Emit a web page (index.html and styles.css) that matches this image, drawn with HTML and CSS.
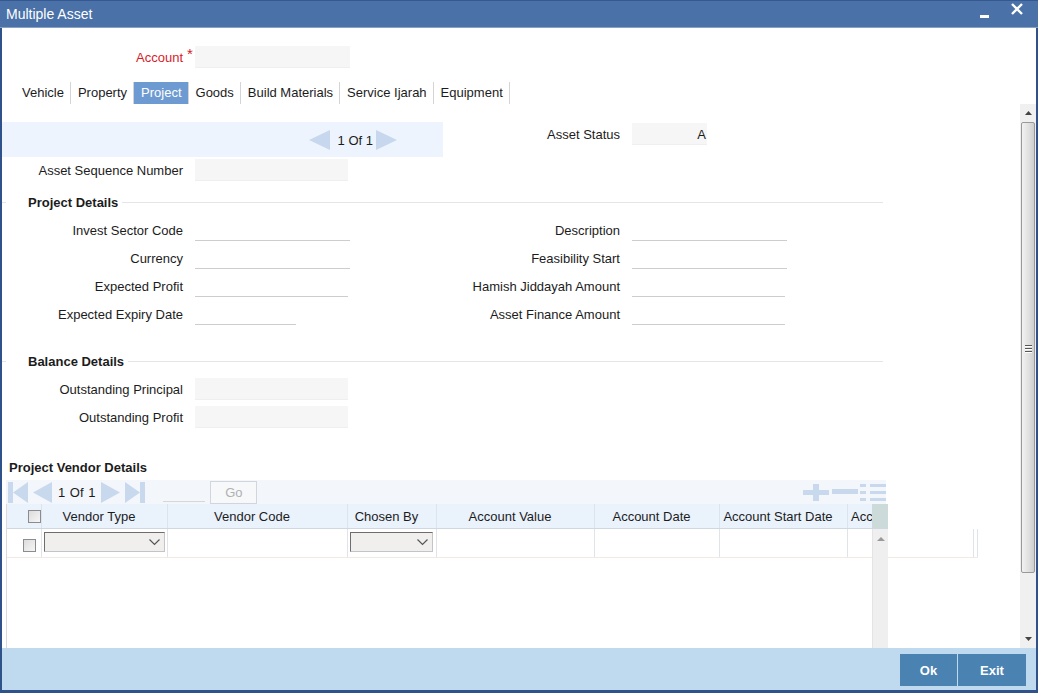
FILE: index.html
```html
<!DOCTYPE html>
<html>
<head>
<meta charset="utf-8">
<link rel="stylesheet" href="styles.css">
</head>
<body>
<div class="window">
  <div class="titlebar">
    <span class="title">Multiple Asset</span>
    <div class="winctrls">
      <span class="min"></span>
      <svg class="close" width="12" height="12" viewBox="0 0 12 12"><path d="M1 1 L11 11 M11 1 L1 11" stroke="#fff" stroke-width="2.4" fill="none"/></svg>
    </div>
  </div>
  <div class="frame">
    <div class="header">
      <div class="acct-row">
        <span class="lbl req">Account</span><span class="star">*</span><div class="inp fill w155 nomargin"></div>
      </div>
      <div class="tabs">
        <span class="tab">Vehicle</span>
        <span class="tab">Property</span>
        <span class="tab active">Project</span>
        <span class="tab">Goods</span>
        <span class="tab">Build Materials</span>
        <span class="tab">Service Ijarah</span>
        <span class="tab">Equipment</span>
      </div>
    </div>
    <div class="body">
      <div class="content">
        <div class="row-top">
          <div class="pager">
            <svg width="21" height="20" viewBox="0 0 21 20"><polygon points="21,0 21,20 0,10" fill="#c6d7ee"/></svg>
            <span class="ptext">1 Of 1</span>
            <svg width="21" height="20" viewBox="0 0 21 20"><polygon points="0,0 21,10 0,20" fill="#c6d7ee"/></svg>
          </div>
          <div class="status">
            <span class="lbl st">Asset Status</span>
            <div class="inp fill w75 aval">A</div>
          </div>
        </div>
        <div class="frow seq">
          <span class="lbl">Asset Sequence Number</span><div class="inp fill w153"></div>
        </div>

        <div class="sect">Project Details</div>
        <div class="frow first">
          <div class="fcol"><span class="lbl">Invest Sector Code</span><div class="inp line w155"></div></div>
          <div class="fcol r"><span class="lbl">Description</span><div class="inp line w155"></div></div>
        </div>
        <div class="frow">
          <div class="fcol"><span class="lbl">Currency</span><div class="inp line w155"></div></div>
          <div class="fcol r"><span class="lbl">Feasibility Start</span><div class="inp line w155"></div></div>
        </div>
        <div class="frow">
          <div class="fcol"><span class="lbl">Expected Profit</span><div class="inp line w153"></div></div>
          <div class="fcol r"><span class="lbl">Hamish Jiddayah Amount</span><div class="inp line w153"></div></div>
        </div>
        <div class="frow">
          <div class="fcol"><span class="lbl">Expected Expiry Date</span><div class="inp line w101"></div></div>
          <div class="fcol r"><span class="lbl">Asset Finance Amount</span><div class="inp line w153"></div></div>
        </div>

        <div class="sect bal">Balance Details</div>
        <div class="frow first">
          <div class="fcol"><span class="lbl">Outstanding Principal</span><div class="inp fill w153"></div></div>
        </div>
        <div class="frow">
          <div class="fcol"><span class="lbl">Outstanding Profit</span><div class="inp fill w153"></div></div>
        </div>

        <div class="vendor">
          <div class="vh">Project Vendor Details</div>
          <div class="toolbar">
            <svg class="ic first" width="20" height="21" viewBox="0 0 20 21"><rect x="0" y="0" width="5" height="21" fill="#c8d9ee"/><polygon points="20,0 20,21 5,10.5" fill="#c8d9ee"/></svg>
            <svg class="ic prev" width="19" height="21" viewBox="0 0 19 21"><polygon points="19,0 19,21 0,10.5" fill="#c8d9ee"/></svg>
            <span class="ttext">1 Of 1</span>
            <svg class="ic next" width="19" height="21" viewBox="0 0 19 21"><polygon points="0,0 19,10.5 0,21" fill="#c8d9ee"/></svg>
            <svg class="ic last" width="20" height="21" viewBox="0 0 20 21"><polygon points="0,0 15,10.5 0,21" fill="#c8d9ee"/><rect x="15" y="0" width="5" height="21" fill="#c8d9ee"/></svg>
            <div class="pgin"></div>
            <div class="gobtn">Go</div>
            <div class="spacer"></div>
            <svg class="ic" width="26" height="17" viewBox="0 0 26 17"><rect x="0" y="6" width="26" height="5" fill="#c8d9ee"/><rect x="10" y="0" width="6" height="17" fill="#c8d9ee"/></svg>
            <svg class="ic minus" width="26" height="17" viewBox="0 0 26 17"><rect x="0" y="5" width="26" height="5" fill="#c8d9ee"/></svg>
            <svg class="ic list" width="26" height="17" viewBox="0 0 26 17"><rect x="0" y="0" width="6" height="3" fill="#c8d9ee"/><rect x="10" y="0" width="16" height="3" fill="#c8d9ee"/><rect x="0" y="7" width="6" height="3" fill="#c8d9ee"/><rect x="10" y="7" width="16" height="3" fill="#c8d9ee"/><rect x="0" y="14" width="6" height="3" fill="#c8d9ee"/><rect x="10" y="14" width="16" height="3" fill="#c8d9ee"/></svg>
          </div>
          <div class="table">
            <div class="thead">
              <div class="th c0"><span class="chk hchk"></span></div>
              <div class="th c1">Vendor Type</div>
              <div class="th c2">Vendor Code</div>
              <div class="th c3">Chosen By</div>
              <div class="th c4">Account Value</div>
              <div class="th c5">Account Date</div>
              <div class="th c6">Account Start Date</div>
              <div class="th c7">Acc</div>
              <div class="th c8"></div>
            </div>
            <div class="trow">
              <div class="td c0"><span class="chk rchk"></span></div>
              <div class="td c1"><div class="sel s1"><svg width="11" height="7" viewBox="0 0 11 7"><polyline points="0.5,0.5 5.5,5.5 10.5,0.5" stroke="#555" stroke-width="1.2" fill="none"/></svg></div></div>
              <div class="td c2"></div>
              <div class="td c3"><div class="sel s3"><svg width="11" height="7" viewBox="0 0 11 7"><polyline points="0.5,0.5 5.5,5.5 10.5,0.5" stroke="#555" stroke-width="1.2" fill="none"/></svg></div></div>
              <div class="td c4"></div>
              <div class="td c5"></div>
              <div class="td c6"></div>
              <div class="td c7w"></div>
              <div class="td c9"></div>
            </div>
            <div class="iscroll">
              <svg width="8" height="5" viewBox="0 0 8 5"><polygon points="0,5 4,1 8,5" fill="#9a9a9a"/></svg>
            </div>
          </div>
        </div>
      </div>
      <div class="vscroll">
        <div class="arr up"><svg width="7" height="4" viewBox="0 0 7 4"><polygon points="0,4 3.5,0 7,4" fill="#444"/></svg></div>
        <div class="thumb"><div class="grip"><i></i><i></i><i></i></div></div>
        <div class="track"></div>
        <div class="arr down"><svg width="7" height="4" viewBox="0 0 7 4"><polygon points="0,0 3.5,4 7,0" fill="#444"/></svg></div>
      </div>
    </div>
    <div class="footer">
      <button class="btn ok">Ok</button>
      <button class="btn exit">Exit</button>
    </div>
  </div>
</div>
</body>
</html>
```
FILE: styles.css
```css
* { box-sizing: border-box; }
html, body { margin: 0; padding: 0; }
body {
  width: 1038px;
  height: 693px;
  overflow: hidden;
  background: #fff;
  font-family: "Liberation Sans", Arial, sans-serif;
  font-size: 13px;
  color: #1c1c1c;
}
.window { width: 1038px; height: 693px; display: flex; flex-direction: column; }

.titlebar {
  height: 28px;
  flex: none;
  background: #4a71a8;
  border-top: 1px solid #35598f;
  border-bottom: 1px solid #8aa2c2;
  display: flex;
  align-items: center;
  padding-left: 6px;
  color: #fff;
}
.title { font-size: 14px; line-height: 26px; }
.winctrls { margin-left: auto; display: flex; align-items: center; height: 26px; }
.min { width: 9px; height: 3px; background: #fff; margin-top: 4px; margin-right: 22px; }
.close { margin-right: 15px; margin-bottom: 10px; }

.frame {
  flex: 1;
  border-left: 2px solid #2f528a;
  border-right: 2px solid #2f528a;
  border-bottom: 3px solid #2f528a;
  display: flex;
  flex-direction: column;
}

.header { height: 76px; flex: none; padding-top: 18px; }
.acct-row { display: flex; height: 22px; }
.lbl { width: 181px; flex: none; text-align: right; line-height: 22px; padding-top: 1px; white-space: nowrap; }
.req { color: #d41d2b; }
.star { width: 12px; flex: none; color: #d41d2b; font-size: 15px; line-height: 14px; padding-left: 4px; padding-top: 1px; }
.inp { height: 22px; flex: none; margin-left: 12px; }
.inp.nomargin { margin-left: 0; }
.fill { background: #f6f6f6; border-bottom: 1px solid #efefef; }
.line { border-bottom: 1px solid #cdcdcd; }
.w155 { width: 155px; }
.w153 { width: 153px; }
.w101 { width: 101px; }
.w75 { width: 75px; }

.tabs { display: flex; margin-top: 14px; padding-left: 13px; height: 22px; }
.tab { padding: 0 6px 0 7px; line-height: 22px; border-right: 1px solid #d4d4d4; white-space: nowrap; }
.tab.active { background: #6d9bd1; color: #fff; }

.body { height: 544px; flex: none; display: flex; }
.content { flex: 1; padding-top: 18px; overflow: hidden; }

.row-top { display: flex; height: 35px; }
.pager {
  width: 441px;
  flex: none;
  height: 35px;
  background: #edf4fd;
  display: flex;
  align-items: center;
  justify-content: flex-end;
  padding-right: 46px;
}
.ptext { margin: 0 3px 0 8px; padding-top: 1px; }
.status { display: flex; margin-top: 1px; height: 22px; }
.lbl.st { width: 177px; }
.aval { text-align: right; line-height: 22px; padding-right: 1px; padding-top: 1px; }

.frow { display: flex; height: 22px; margin-top: 6px; }
.frow.seq { margin-top: 2px; }
.frow.first { margin-top: 9px; }
.fcol { display: flex; width: 438px; flex: none; }
.fcol.r .lbl { width: 180px; }

.sect {
  display: flex;
  align-items: center;
  width: 881px;
  height: 16px;
  margin-top: 13px;
  font-weight: bold;
  white-space: nowrap;
}
.sect.bal { margin-top: 28px; }
.sect::before { content: ""; width: 4px; border-top: 1px solid #e5e5e5; margin-right: 22px; }
.sect::after { content: ""; flex: 1; border-top: 1px solid #e5e5e5; margin-left: 4px; }

.vendor { margin-left: 4px; }
.vh { margin-top: 31px; height: 16px; line-height: 17px; font-weight: bold; padding-left: 3px; }
.toolbar {
  margin-top: 5px;
  width: 880px;
  height: 24px;
  background: #f3f7fc;
  display: flex;
  align-items: center;
}
.ic { flex: none; display: block; }
.ic.first { margin-left: 2px; }
.ic.prev { margin-left: 5px; }
.ttext { margin-left: 6px; word-spacing: 1px; }
.ic.next { margin-left: 6px; }
.ic.last { margin-left: 5px; }
.pgin { width: 42px; height: 20px; margin-left: 18px; border-bottom: 1px solid #d6d6d6; align-self: flex-start; margin-top: 2px; }
.gobtn {
  width: 47px; height: 23px; margin-left: 5px;
  border: 1px solid #d2d6dc; background: #f6f8fa;
  color: #b0b0b0; text-align: center; line-height: 21px;
}
.spacer { flex: 1; }
.ic.minus { margin-left: 3px; }
.ic.list { margin-left: 2px; }

.table { width: 972px; height: 144px; border-left: 1px solid #dadada; position: relative; }
.thead { display: flex; width: 881px; height: 25px; background: #eaf2fc; border-bottom: 1px solid #cfd7e0; }
.th {
  flex: none; height: 24px; line-height: 25px; text-align: center;
  padding-right: 11px; border-right: 1px solid #dbe3ec; white-space: nowrap; overflow: hidden;
}
.c0 { width: 35px; } .c1 { width: 126px; } .c2 { width: 180px; } .c3 { width: 89px; }
.c4 { width: 158px; } .c5 { width: 125px; } .c6 { width: 128px; }
.th.c7 { width: 24px; text-align: left; padding: 0 0 0 3px; border-right: 0; }
.th.c8 { width: 16px; background: #cddada; border-right: 0; }
.th.c0 { padding: 0; position: relative; }

.chk {
  display: block; width: 13px; height: 13px;
  border: 1px solid #8c8c8c;
  background: linear-gradient(135deg, #dcdcdc, #f6f6f6);
}
.hchk { margin: 6px 0 0 21px; }
.rchk { margin: 10px 0 0 16px; }

.trow { display: flex; height: 29px; width: 971px; border-bottom: 1px solid #f3e8e2; }
.td { flex: none; height: 28px; border-right: 1px solid #dfe4ea; }
.td.c7w { width: 126px; }
.td.c9 { width: 4px; }
.sel {
  height: 20px; margin-top: 3px;
  background: #f0efed;
  border: 1px solid #c4c4c4;
  border-top-color: #6e6e6e;
  border-left-color: #6e6e6e;
  display: flex; align-items: center; justify-content: flex-end;
  padding-right: 4px;
}
.sel.s1 { width: 121px; margin-left: 2px; }
.sel.s3 { width: 83px; margin-left: 2px; }

.iscroll {
  position: absolute;
  left: 865px; top: 25px;
  width: 16px; height: 119px;
  background: #efefef;
  border-left: 1px solid #e4e4e4;
  display: flex; justify-content: center;
  padding-top: 7px;
}
.iscroll svg { display: block; }

.vscroll { width: 16px; flex: none; background: #f0f0f0; display: flex; flex-direction: column; align-items: center; }
.arr { height: 18px; width: 16px; display: flex; align-items: center; justify-content: center; flex: none; }
.arr svg { display: block; }
.thumb {
  width: 14px; height: 451px; flex: none;
  border: 1px solid #999;
  border-radius: 2px;
  background: linear-gradient(90deg, #f2f2f2, #e2e2e2 50%, #cfcfcf);
  display: flex; align-items: center; justify-content: center;
}
.grip { display: flex; flex-direction: column; gap: 2px; margin-top: 2px; }
.grip i { display: block; width: 7px; height: 1px; background: #555; box-shadow: 0 1px 0 #fff; }
.track { flex: 1; }

.footer {
  height: 42px; flex: none;
  background: #bfd9ee;
  display: flex; justify-content: flex-end;
  padding: 6px 10px 0 0; gap: 1px;
}
.btn {
  height: 32px; border: 0; padding: 0; margin: 0;
  background: #4a82b1; color: #fff;
  font-family: "Liberation Sans", Arial, sans-serif;
  font-weight: bold; font-size: 13px;
}
.btn.ok { width: 57px; }
.btn.exit { width: 68px; }
```
